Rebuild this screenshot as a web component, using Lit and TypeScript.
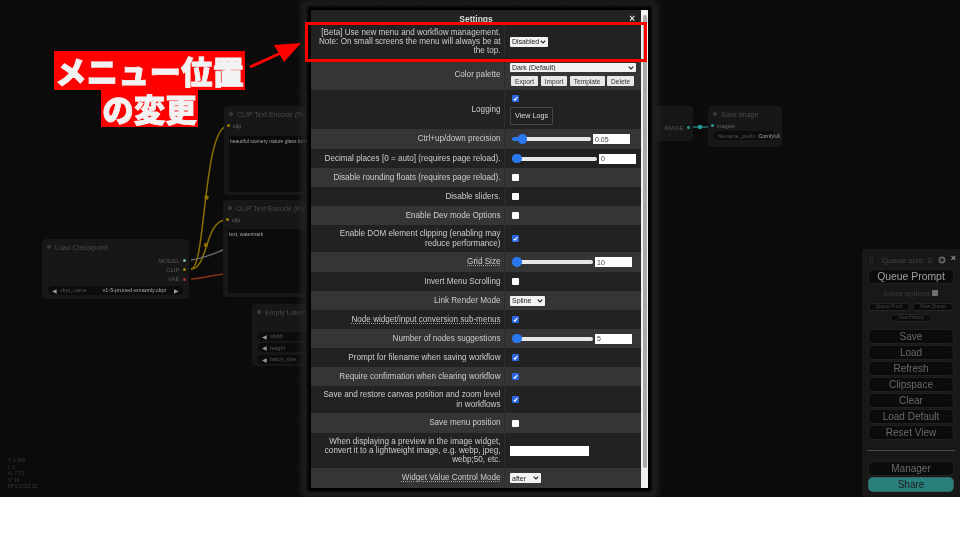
import { LitElement, html, css, svg } from "lit";
import { customElement } from "lit/decorators.js";

type Row = { label: string; h: number; kind: string; value?: string; wide?: boolean; checked?: boolean; under?: boolean };

const rows: Row[] = [
  { label: "[Beta] Use new menu and workflow management. Note: On small screens the menu will always be at the top.", h: 32, kind: "beta" },
  { label: "Color palette", h: 31, kind: "palette" },
  { label: "Logging", h: 39, kind: "logging" },
  { label: "Ctrl+up/down precision", h: 20, kind: "range", value: "0.05" },
  { label: "Decimal places [0 = auto] (requires page reload).", h: 19, kind: "range", value: "0", wide: true },
  { label: "Disable rounding floats (requires page reload).", h: 19, kind: "check" },
  { label: "Disable sliders.", h: 19, kind: "check" },
  { label: "Enable Dev mode Options", h: 19, kind: "check" },
  { label: "Enable DOM element clipping (enabling may reduce performance)", h: 27, kind: "check", checked: true },
  { label: "Grid Size", h: 20, kind: "range", value: "10", under: true },
  { label: "Invert Menu Scrolling", h: 19, kind: "check" },
  { label: "Link Render Mode", h: 19, kind: "link" },
  { label: "Node widget/input conversion sub-menus", h: 19, kind: "check", checked: true, under: true },
  { label: "Number of nodes suggestions", h: 19, kind: "range", value: "5" },
  { label: "Prompt for filename when saving workflow", h: 19, kind: "check", checked: true },
  { label: "Require confirmation when clearing workflow", h: 19, kind: "check", checked: true },
  { label: "Save and restore canvas position and zoom level in workflows", h: 27, kind: "check", checked: true },
  { label: "Save menu position", h: 20, kind: "check" },
  { label: "When displaying a preview in the image widget, convert it to a lightweight image, e.g. webp, jpeg, webp;50, etc.", h: 35, kind: "text" },
  { label: "Widget Value Control Mode", h: 20, kind: "widget", under: true },
];

const mainButtons = ["Save", "Load", "Refresh", "Clipspace", "Clear", "Load Default", "Reset View"];

@customElement("app-root")
export class AppRoot extends LitElement {
  static styles = css`
    :host { display: block; width: 960px; height: 540px; background: #fff; overflow: hidden; font-family: "Liberation Sans", Arial, sans-serif; }
    .stage { filter: blur(0.5px); }
    .canvas {
      position: relative; width: 960px; height: 497px; overflow: hidden; background-color: #0b0b0b;
      background-image: linear-gradient(#0d0d0d 1px, transparent 1px), linear-gradient(90deg, #0d0d0d 1px, transparent 1px);
      background-size: 47px 47px;
    }
    .wires { position: absolute; inset: 0; }
    .node { position: absolute; background: #171717; border-radius: 4px; color: #555; font-size: 6px; }
    .node .title { display: flex; align-items: center; gap: 4px; font-size: 7px; height: 16px; padding-left: 5px; color: #4a4a4a; white-space: nowrap; overflow: hidden; }
    .node .title::before { content: ""; width: 4px; height: 4px; border-radius: 50%; background: #3a3a3a; flex: none; }
    .n-ckpt { left: 42px; top: 239px; width: 147px; height: 60px; }
    .n-clip1 { left: 224px; top: 106px; width: 110px; height: 89px; }
    .n-clip2 { left: 223px; top: 200px; width: 110px; height: 97px; }
    .n-latent { left: 252px; top: 304px; width: 100px; height: 62px; }
    .n-prev { left: 620px; top: 106px; width: 73px; height: 35px; }
    .n-save { left: 708px; top: 106px; width: 74px; height: 41px; }
    .outs { display: flex; flex-direction: column; align-items: flex-end; gap: 0; padding-right: 3px; margin-top: 1px; }
    .outs span { display: flex; align-items: center; gap: 3.5px; height: 9.3px; }
    .pin { display: inline-block; width: 3px; height: 3px; border-radius: 50%; background: #a08400; }
    .pin.teal { background: #2a9c98; }
    .pin.red { background: #a03a20; }
    .pin.gray { background: #7ba; }
    .inp { display: flex; align-items: center; gap: 3px; padding-left: 3px; height: 9px; margin-top: -1px; color: #666; font-size: 5.5px; }
    .ta { background: #0b0b0b; color: #a5a5a5; font-size: 5px; margin: 2px 0 0 5px; padding: 2px 1px; overflow: hidden; white-space: nowrap; }
    .n-clip1 .ta { height: 52px; margin-top: 6px; }
    .n-clip2 .ta { height: 60px; margin-top: 5px; }
    .widget { display: flex; align-items: center; justify-content: space-between; gap: 3px; background: #0c0c0c; border-radius: 5px; height: 9px; margin: 2px 6px 0; padding: 0 4px; color: #555; font-size: 5.5px; white-space: nowrap; }
    .widget b { color: #aaa; font-weight: normal; margin-left: auto; margin-right: 5px; }
    .n-save .widget b { margin-right: 0; }
    .widget i { font-style: normal; color: #999; font-size: 6px; }
    .latent-body { padding-top: 9px; }
    .latent-body .widget { margin-top: 2.5px; justify-content: flex-start; height: 9px; }
    .n-save .widget { margin-top: 1px; }

    .stats { position: absolute; left: 8px; top: 457px; color: #3a3a3a; font-size: 5px; line-height: 6.6px; white-space: pre; }

    .note { position: absolute; left: 53px; top: 51px; width: 193px; display: flex; flex-direction: column; align-items: center; }
    .note span { display: block; background: #f00; color: #f2f2f2; font-family: "Noto Sans CJK JP", sans-serif; font-weight: 900; font-size: 31.5px; white-space: nowrap; -webkit-text-stroke: 0.8px #f2f2f2; padding: 0 1px; }
    .note .l1 { line-height: 39px; height: 39px; }
    .note .l2 { line-height: 37px; height: 37px; }

    .arrow { position: absolute; inset: 0; pointer-events: none; }

    .dialog {
      position: absolute; left: 310px; top: 9px; width: 339px; height: 480px; box-sizing: border-box;
      display: flex; background: #222; border: 1px solid #000;
      box-shadow: 0 0 3px 3px #000, 0 0 7px 8px #262626;
    }
    .content { width: 330px; flex: none; overflow: hidden; }
    .head { position: relative; height: 17px; display: flex; align-items: center; justify-content: center; color: #ddd; font-weight: bold; font-size: 8.5px; }
    .close { position: absolute; right: 6px; top: 3px; font-size: 10px; color: #ddd; font-weight: bold; line-height: 11px; }
    .row { display: grid; grid-template-columns: 194px 1fr; align-items: stretch; background: #222; box-sizing: border-box; }
    .row:nth-child(even) { background: #353535; }
    .row.k-beta { padding-bottom: 3px; }
    .label { display: flex; align-items: center; justify-content: flex-end; text-align: right; padding: 0 3.5px 0 5px; font-size: 8.15px; line-height: 9.3px; color: #cccccc; border-right: 1px solid #2d2d2d; }
    .label.under span { text-decoration: underline dotted #999; text-underline-offset: 1px; }
    .ctl { display: flex; align-items: center; padding-left: 5px; gap: 2px; min-width: 0; }
    .ctl.col { flex-direction: column; align-items: flex-start; justify-content: center; }
    select {
      appearance: none; margin: 0; padding: 0 0 0 2px; box-sizing: border-box; height: 10px;
      font: 7px "Liberation Sans", Arial, sans-serif; background-color: #f2f2f2; color: #222; border: 0; border-radius: 1px;
      background-image: url("data:image/svg+xml,%3Csvg xmlns='http://www.w3.org/2000/svg' width='6' height='4'%3E%3Cpath d='M.7.7L3 3l2.3-2.3' fill='none' stroke='%23222' stroke-width='1.1'/%3E%3C/svg%3E");
      background-repeat: no-repeat; background-position: right 2px center;
    }
    .s-beta { width: 38px; }
    .s-pal { width: 126px; height: 9px; }
    .s-link { width: 35px; }
    .s-wid { width: 31px; }
    .btns { display: flex; gap: 2.5px; margin-top: 2px; margin-left: 1px; }
    .btns button { height: 10px; padding: 0 4px; border: 0; border-radius: 1px; background: #e8e8e8; color: #333; font: 6.6px "Liberation Sans", Arial, sans-serif; }
    .logs { margin-top: 3px; width: 43px; height: 18px; padding: 0; background: #222; color: #ddd; border: 1px solid #484848; border-radius: 1px; font: 7.2px "Liberation Sans", Arial, sans-serif; }
    input[type="checkbox"] {
      appearance: none; margin: 0 0 0 2px; width: 7px; height: 7px; background-color: #fff; border-radius: 1px; background-repeat: no-repeat; background-position: center;
    }
    input[type="checkbox"]:checked {
      background-color: #2a66e0;
      background-image: url("data:image/svg+xml,%3Csvg xmlns='http://www.w3.org/2000/svg' width='7' height='7'%3E%3Cpath d='M1.8 4L3 5.2 5.3 2' fill='none' stroke='%23fff' stroke-width='1.2'/%3E%3C/svg%3E");
    }
    input[type="range"] { appearance: none; background: transparent; margin: 0 0 0 2px; width: 79px; height: 10px; flex: none; }
    input[type="range"]::-webkit-slider-runnable-track { height: 4px; border-radius: 2px; background: linear-gradient(90deg, #2a78f0 9px, #e8e8e8 9px); }
    input[type="range"]::-webkit-slider-thumb { appearance: none; width: 9.5px; height: 9.5px; margin-top: -2.75px; border-radius: 50%; background: #2a78f0; }
    .wide input[type="range"] { width: 85px; }
    .mid input[type="range"] { width: 81px; }
    .num { box-sizing: border-box; width: 37px; height: 10px; padding: 0 2px; border: 0; background: #fff; color: #444; font: 7px "Liberation Sans", Arial, sans-serif; }
    .txt { box-sizing: border-box; width: 79px; height: 10px; border: 0; padding: 0; background: #fff; }
    .sb { flex: none; width: 7px; background: #f1f1f1; padding: 5px 1px 20px 2px; box-sizing: border-box; }
    .sb div { height: 100%; background: #a8a8a8; border-radius: 2px; }

    .redbox { position: absolute; left: 305px; top: 22px; width: 342px; height: 40px; box-sizing: border-box; border: 3px solid #f00; }

    .panel { position: absolute; left: 862px; top: 249px; width: 98px; height: 248px; box-sizing: border-box; background: #181818; border-radius: 3px 0 0 0; padding: 3px 6px 0; display: flex; flex-direction: column; align-items: stretch; color: #555; }
    .qhead { position: relative; display: flex; align-items: center; justify-content: center; height: 14px; margin-top: 1px; font-size: 8.1px; color: #444; padding-right: 8px; }
    .grip { position: absolute; left: 1px; top: 4px; width: 4px; height: 7px; background-image: radial-gradient(#555 0.6px, transparent 0.8px); background-size: 2.5px 2.5px; }
    .gear { position: absolute; right: 8px; top: 3px; }
    .x { position: absolute; right: -2px; top: 0; color: #999; font-size: 9px; font-weight: bold; }
    .pbtn { box-sizing: border-box; background: #0b0b0b; border: 1px solid #202020; border-radius: 5px; color: #6a6a6a; text-align: center; font: 10px/13px "Liberation Sans", Arial, sans-serif; padding: 0; height: 15px; margin-bottom: 1px; flex: none; }
    .queue { margin-top: 2px; height: 15px; color: #a0a0a0; font-size: 10.4px; line-height: 13px; margin-bottom: 0; }
    .extra { display: flex; align-items: center; justify-content: center; gap: 2px; height: 16px; margin-top: 1px; font-size: 8px; color: #3a3a3a; margin-bottom: 2px; }
    .extra i { width: 6px; height: 6px; background: #707070; border-radius: 1px; display: block; }
    .minis { display: flex; justify-content: center; flex-wrap: wrap; gap: 3px 2px; margin-bottom: 6.5px; }
    .mini { box-sizing: border-box; width: 42px; height: 8px; background: #0b0b0b; border: 1px solid #262626; border-radius: 4px; color: #484848; font: 4.8px/6px "Liberation Sans", Arial, sans-serif; padding: 0; }
    .sep { height: 1px; background: #4a4a4a; margin: 9px -1px 10.5px; flex: none; }
    .share { background: #297f7c; color: #1c1c1c; border: 1px dotted #444; }
  `;

  private control(r: Row) {
    switch (r.kind) {
      case "beta":
        return html`<div class="ctl"><select class="s-beta"><option>Disabled</option></select></div>`;
      case "palette":
        return html`<div class="ctl col"><select class="s-pal"><option>Dark (Default)</option></select>
          <div class="btns"><button>Export</button><button>Import</button><button>Template</button><button>Delete</button></div></div>`;
      case "logging":
        return html`<div class="ctl col"><input type="checkbox" checked /><button class="logs">View Logs</button></div>`;
      case "range": {
        const cls = r.wide ? "wide" : r.value === "0.05" ? "" : "mid";
        const val = r.value === "0.05" ? "8" : "0";
        return html`<div class="ctl ${cls}"><input type="range" min="0" max="100" .value=${val} /><input class="num" .value=${r.value ?? ""} /></div>`;
      }
      case "check":
        return html`<div class="ctl"><input type="checkbox" ?checked=${r.checked} /></div>`;
      case "link":
        return html`<div class="ctl"><select class="s-link"><option>Spline</option></select></div>`;
      case "text":
        return html`<div class="ctl"><input class="txt" /></div>`;
      default:
        return html`<div class="ctl"><select class="s-wid"><option>after</option></select></div>`;
    }
  }

  render() {
    return html`<div class="stage"><div class="canvas">
      <svg class="wires" width="960" height="497" fill="none">
        ${svg`
          <path d="M191 269C206 269 203 126 228 126" stroke="#8a7000" stroke-width="1.5"/>
          <path d="M191 269C208 269 205 220 226 220" stroke="#8a7000" stroke-width="1.5"/>
          <path d="M191 260C205 258 212 254 226 249" stroke="#6a6a6a" stroke-width="1.4"/>
          <path d="M191 279C205 278 212 275 226 274" stroke="#8a3218" stroke-width="1.4"/>
          <circle cx="206.5" cy="197.5" r="2.2" fill="#8a7000"/>
          <circle cx="206" cy="245" r="2.2" fill="#8a7000"/>
          <path d="M689 127H712" stroke="#2a8f8c" stroke-width="1.2"/>
          <circle cx="700" cy="127" r="2.2" fill="#2a9c98"/>
        `}
      </svg>

      <div class="node n-ckpt">
        <div class="title">Load Checkpoint</div>
        <div class="outs">
          <span>MODEL <i class="pin gray"></i></span><span>CLIP <i class="pin"></i></span><span>VAE <i class="pin red"></i></span>
        </div>
        <div class="widget"><i>◀</i>ckpt_name<b>v1-5-pruned-emaonly.ckpt</b><i>▶</i></div>
      </div>
      <div class="node n-clip1">
        <div class="title">CLIP Text Encode (Prompt)</div>
        <div class="inp"><i class="pin"></i>clip</div>
        <div class="ta">beautiful scenery nature glass bottle landscape</div>
      </div>
      <div class="node n-clip2">
        <div class="title">CLIP Text Encode (Prompt)</div>
        <div class="inp"><i class="pin"></i>clip</div>
        <div class="ta">text, watermark</div>
      </div>
      <div class="node n-latent">
        <div class="title">Empty Latent Image</div>
        <div class="latent-body">
          <div class="widget"><i>◀</i>width</div>
          <div class="widget"><i>◀</i>height</div>
          <div class="widget"><i>◀</i>batch_size</div>
        </div>
      </div>
      <div class="node n-prev">
        <div class="title"></div>
        <div class="outs"><span>IMAGE <i class="pin teal"></i></span></div>
      </div>
      <div class="node n-save">
        <div class="title">Save Image</div>
        <div class="inp"><i class="pin teal"></i>images</div>
        <div class="widget">filename_prefix<b>ComfyUI</b></div>
      </div>

      <div class="stats">T: 0.00s
I: 0
N: 7 [7]
V: 14
FPS:3333.33</div>

      <div class="panel">
        <div class="qhead"><i class="grip"></i>Queue size: 0
          <svg class="gear" width="8" height="8" viewBox="0 0 8 8"><circle cx="4" cy="4" r="2.6" fill="none" stroke="#666" stroke-width="1.6"/></svg>
          <span class="x">×</span></div>
        <button class="pbtn queue">Queue Prompt</button>
        <div class="extra">Extra options <i></i></div>
        <div class="minis">
          <button class="mini">Queue Front</button><button class="mini">View Queue</button><button class="mini">View History</button>
        </div>
        ${mainButtons.map((b) => html`<button class="pbtn">${b}</button>`)}
        <div class="sep"></div>
        <button class="pbtn">Manager</button>
        <button class="pbtn share">Share</button>
      </div>

      <div class="dialog">
        <div class="content">
          <div class="head">Settings<span class="close">×</span></div>
          <div class="rows">
            ${rows.map(
              (r) => html`<div class="row k-${r.kind}" style="height:${r.h}px">
                <div class="label ${r.under ? "under" : ""}"><span>${r.label}</span></div>
                ${this.control(r)}
              </div>`
            )}
          </div>
        </div>
        <div class="sb"><div></div></div>
      </div>

      <div class="redbox"></div>
      <svg class="arrow" width="960" height="497">
        ${svg`<path d="M250 67L283 52" stroke="#f00" stroke-width="3"/><path d="M301 43L274 45L284 62Z" fill="#f00"/>`}
      </svg>
      <div class="note"><span class="l1">メニュー位置</span><span class="l2">の変更</span></div>
    </div></div>`;
  }
}
